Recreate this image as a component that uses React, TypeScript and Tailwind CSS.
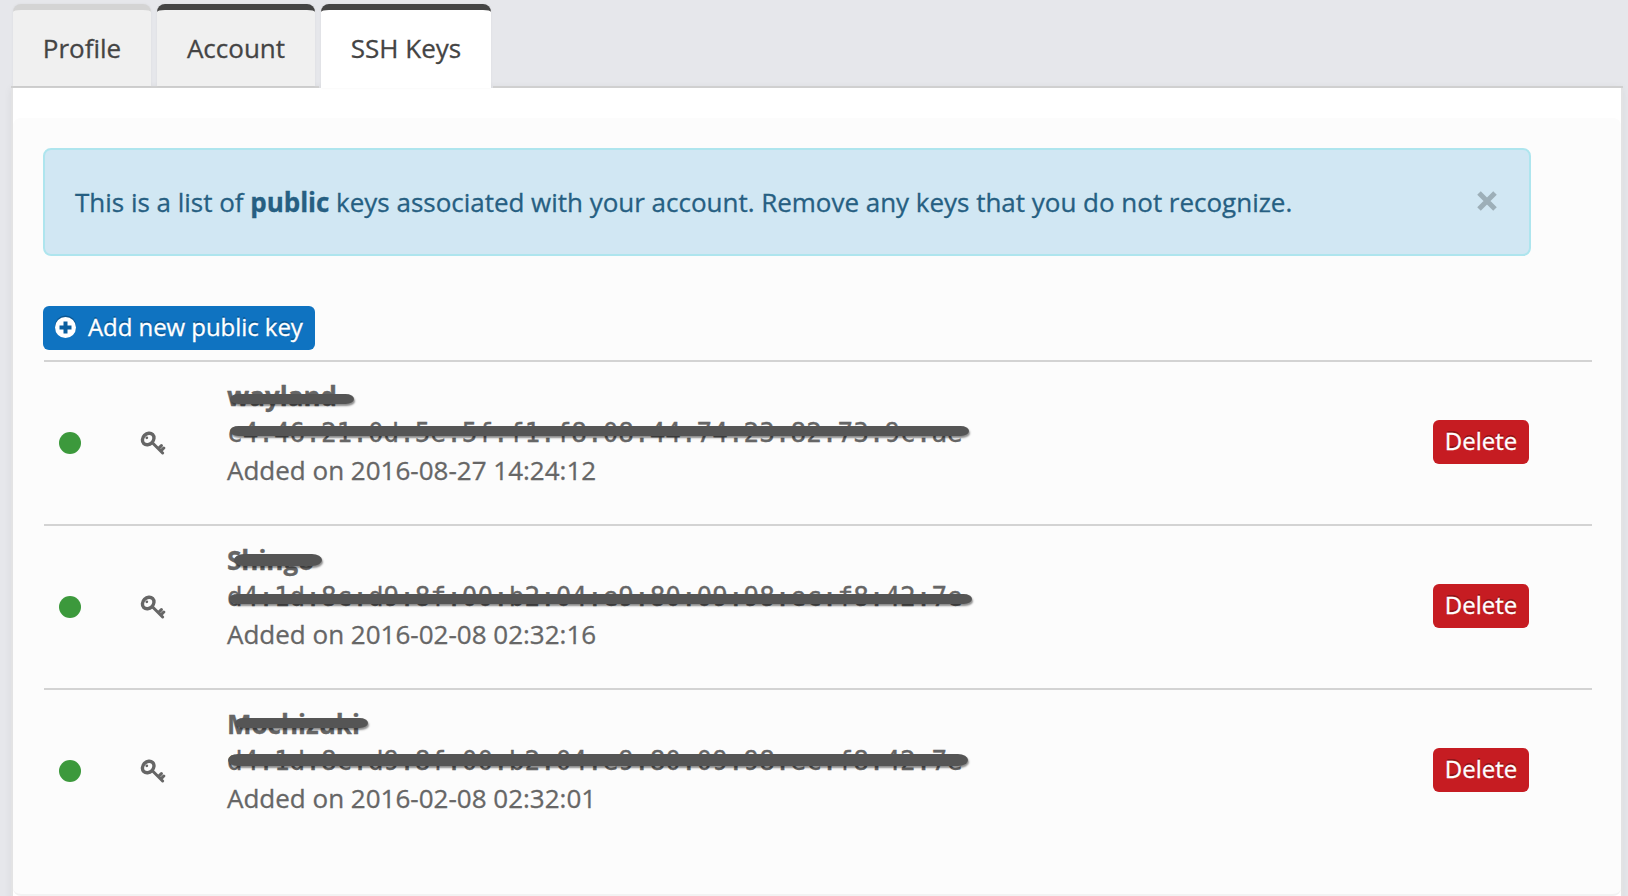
import type { ReactNode } from "react";

type Mark = { className: string };
type KeyEntry = { name: string; fingerprint: string; added: string; nameMark: Mark; printMark: Mark };

const keys: KeyEntry[] = [
  {
    name: "wayland",
    fingerprint: "c4:46:21:0d:5e:5f:f1:f8:08:44:74:23:82:73:9c:ae",
    added: "2016-08-27 14:24:12",
    nameMark: { className: "left-[3px] top-[16px] w-[124px] h-[10px]" },
    printMark: { className: "left-[3px] top-[11px] w-[739px] h-[10px]" },
  },
  {
    name: "Shingo",
    fingerprint: "d4:1d:8c:d9:8f:00:b2:04:e9:80:09:98:ec:f8:42:7e",
    added: "2016-02-08 02:32:16",
    nameMark: { className: "left-[7px] top-[12px] w-[88px] h-[12px]" },
    printMark: { className: "left-[2px] top-[15px] w-[743px] h-[10px]" },
  },
  {
    name: "Mochizuki",
    fingerprint: "d4:1d:8c:d9:8f:00:b2:04:e9:80:09:98:ec:f8:42:7e",
    added: "2016-02-08 02:32:01",
    nameMark: { className: "left-[8px] top-[12px] w-[133px] h-[10px]" },
    printMark: { className: "left-[1px] top-[11px] w-[740px] h-[12px]" },
  },
];

function Scribble({ className }: Mark) {
  return (
    <span
      className={`absolute rounded-[10px/6px] bg-[#555] shadow-[1px_2px_2px_rgba(0,0,0,0.45)] ${className}`}
    />
  );
}

function Tab({ className, children }: { className: string; children: ReactNode }) {
  return (
    <button
      className={`rounded-t-[8px] border-t-[6px] text-center text-[#444] shadow-[0_0_3px_rgba(0,0,0,0.05)] ${className}`}
    >
      {children}
    </button>
  );
}

function KeyIcon() {
  return (
    <svg viewBox="0 0 26 24" className="h-[24px] w-[26px]" fill="none" stroke="#666" strokeLinecap="round">
      <ellipse cx="8.2" cy="8" rx="6.3" ry="5.2" strokeWidth="3.4" transform="rotate(-45 8.2 8)" />
      <circle cx="6.8" cy="6.8" r="1.4" fill="#666" stroke="none" />
      <path d="M12.6 12 22.6 22M18.4 17.6l3-3M21.2 19.6l2.6-2.6" strokeWidth="3" />
    </svg>
  );
}

function KeyRow({ entry }: { entry: KeyEntry }) {
  return (
    <li className="flex h-[164px] border-t-2 border-[#d3d3d3] text-[#666]">
      <div className="flex w-[96px] items-start pl-[15px] pt-[69.5px]">
        <span className="size-[22px] rounded-full bg-[#3c993c]" />
      </div>
      <div className="w-[87px] pt-[69px]">
        <KeyIcon />
      </div>
      <div className="flex-1 pt-[16px] leading-[37px]">
        <div className="relative h-[37px]">
          <b>{entry.name}</b>
          <Scribble className={entry.nameMark.className} />
        </div>
        <div className="relative h-[37px]">
          <span className="block font-['DejaVu_Sans_Mono',monospace] leading-[37px]">{entry.fingerprint}</span>
          <Scribble className={entry.printMark.className} />
        </div>
        <div>Added on {entry.added}</div>
      </div>
      <div className="pr-[63px] pt-[58px]">
        <button className="h-[44px] w-[96px] rounded-[6px] bg-[#c61c22] pb-[2px] text-2xl leading-[42px] text-white [text-shadow:0_-2px_0_rgba(0,0,0,0.3)]">
          Delete
        </button>
      </div>
    </li>
  );
}

export default function App() {
  return (
    <div className="h-[896px] overflow-hidden bg-[#e6e7eb] pl-[11px] pr-[5px] pt-1 font-['Open_Sans',sans-serif] text-[26px] [-webkit-text-stroke:0.3px]">
      <nav className="flex h-[84px]">
        <div className="flex h-[84px] w-[308px] gap-[6px] border-b-2 border-[#d0d0d0] pl-[2px]">
          <Tab className="w-[138px] border-[#d4d4d4] bg-[#f0f0f0]">Profile</Tab>
          <Tab className="w-[158px] border-[#444] bg-[#f0f0f0]">Account</Tab>
        </div>
        <div className="flex w-[174px] px-[2px]">
          <Tab className="w-[170px] border-[#444] bg-white pb-[2px]">SSH Keys</Tab>
        </div>
        <div className="flex-1 border-b-2 border-[#d0d0d0]" />
      </nav>
      <main className="h-[820px] border-x-2 border-[#e3e3e4] bg-white pt-[30px] shadow-[0_0_8px_rgba(0,0,0,0.06)]">
        <section className="h-[778px] rounded-[8px] border-b-2 border-[#f2f2f2] bg-[#fcfcfc] pl-[30px] pt-[30px]">
          <div className="flex h-[108px] w-[1488px] items-center justify-between rounded-[8px] border-2 border-[#aee5ee] bg-[#d1e7f3] pl-[30px] pr-[32px] text-[#265f82]">
            <p className="tracking-[-0.018px]">
              This is a list of <b>public</b> keys associated with your account. Remove any keys that you do not
              recognize.
            </p>
            <button aria-label="Close" className="pb-[2px]">
              <svg viewBox="0 0 20 20" className="size-5" stroke="#9dafb8" strokeWidth="5">
                <path d="M2 2 18 18M18 2 2 18" />
              </svg>
            </button>
          </div>
          <button className="mt-[50px] flex h-[44px] w-[272px] items-center rounded-[6px] bg-[#0f73c1] pl-3 text-2xl tracking-[-0.06px] text-white [text-shadow:0_-2px_0_rgba(0,0,0,0.25)]">
            <svg viewBox="0 0 21 21" className="mr-3 size-[21px] overflow-visible">
              <circle cx="10.5" cy="8" r="10.5" fill="#0b5691" />
              <circle cx="10.5" cy="9.5" r="10.5" fill="#fff" />
              <path d="M10.5 3.5v12M4.5 9.5h12" stroke="#0b5f9f" strokeWidth="4" />
            </svg>
            <span className="pb-[2px]">Add new public key</span>
          </button>
          <ul className="ml-px mt-[10px] w-[1548px]">
            {keys.map((entry) => (
              <KeyRow key={entry.name} entry={entry} />
            ))}
          </ul>
        </section>
      </main>
    </div>
  );
}
